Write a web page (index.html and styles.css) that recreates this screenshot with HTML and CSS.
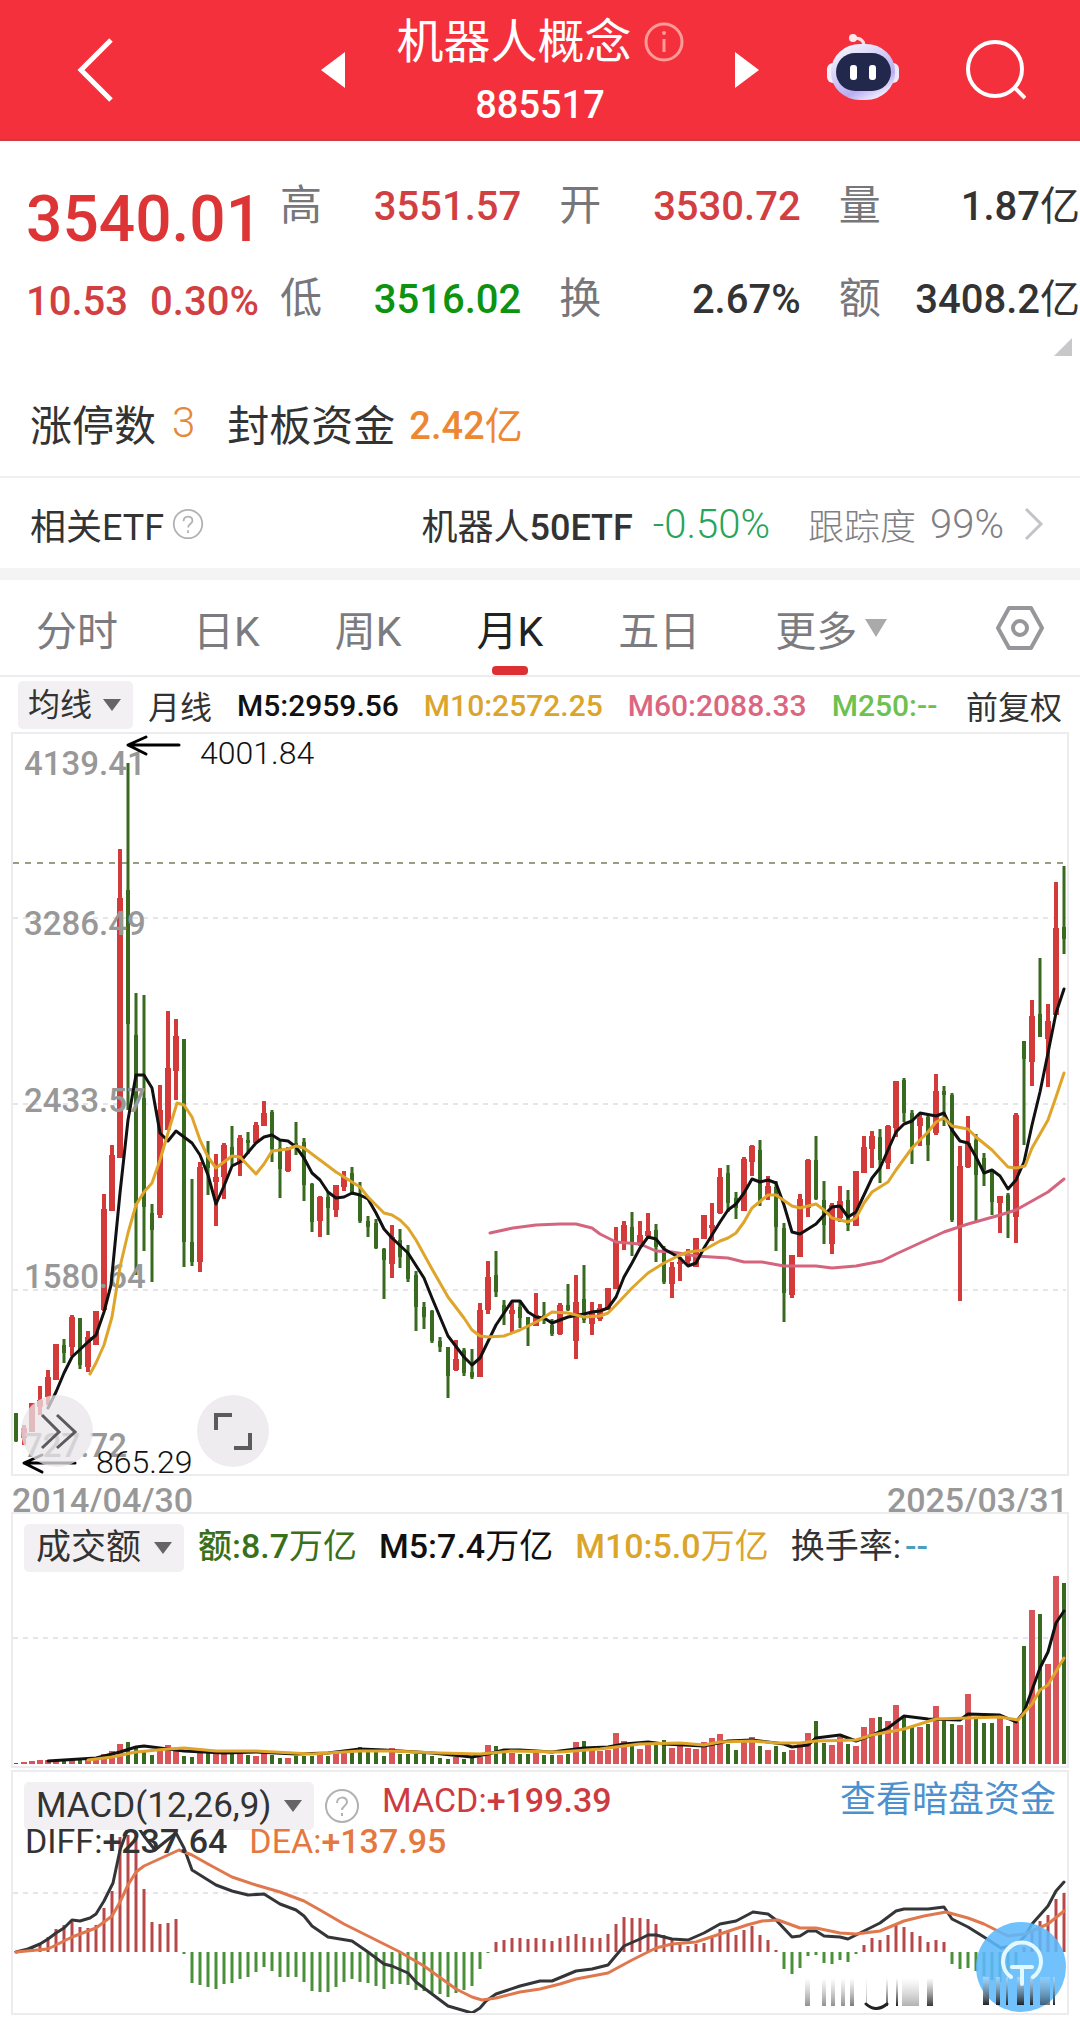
FILE: index.html
```html
<!DOCTYPE html>
<html lang="zh-CN">

<head>
    <meta charset="UTF-8">
    <meta name="viewport" content="width=device-width, initial-scale=1.0">
    <title>机器人概念 885517</title>
    <link rel="stylesheet" href="styles.css">
</head>

<body>
    <header class="topbar">
        <div class="topbar-side topbar-left">
            <button class="icon-btn" aria-label="返回">
                <svg width="40" height="68" viewBox="0 0 40 68"><path d="M35 4 5 34l30 30" fill="none" stroke="#fff" stroke-width="5"/></svg>
            </button>
            <button class="icon-btn" aria-label="上一个">
                <svg width="24" height="36" viewBox="0 0 24 36"><path d="M0 18 24 0v36z" fill="#fff"/></svg>
            </button>
        </div>
        <div class="topbar-title">
            <h1>机器人概念
                <svg width="40" height="40" viewBox="0 0 40 40"><g fill="none" stroke="#ff9a98" stroke-width="3"><circle cx="20" cy="20" r="18"/><path d="M20 17v13"/></g><circle cx="20" cy="11" r="2" fill="#ff9a98"/></svg>
            </h1>
            <div class="code">885517</div>
        </div>
        <div class="topbar-side">
            <button class="icon-btn" aria-label="下一个">
                <svg width="24" height="36" viewBox="0 0 24 36"><path d="M24 18 0 0v36z" fill="#fff"/></svg>
            </button>
            <button class="icon-btn" aria-label="智能助手">
                <svg width="72" height="72" viewBox="0 0 72 72">
                    <defs><linearGradient id="shell" x1="0" y1="0" x2="0.6" y2="1"><stop offset="0" stop-color="#fff"/><stop offset="0.8" stop-color="#b9adf3"/><stop offset="1" stop-color="#eae6fc"/></linearGradient></defs>
                    <path d="M37 12C37 6 33 4 27 4" fill="none" stroke="#f6dfe8" stroke-width="3"/>
                    <circle cx="26" cy="4" r="4" fill="#fbe9ef"/>
                    <rect x="0" y="29" width="12" height="20" rx="6" fill="#f3effc"/>
                    <rect x="60" y="29" width="12" height="20" rx="6" fill="#ece8fb"/>
                    <rect x="4" y="10" width="64" height="56" rx="29" ry="27" fill="url(#shell)"/>
                    <rect x="9" y="19" width="55" height="38" rx="19" fill="#22284c"/>
                    <rect x="23" y="31" width="7" height="15" rx="3" fill="#fff"/>
                    <rect x="42" y="31" width="7" height="15" rx="3" fill="#fff"/>
                </svg>
            </button>
            <button class="icon-btn" aria-label="搜索">
                <svg width="60" height="60" viewBox="0 0 60 60"><g fill="none" stroke="#fff" stroke-width="4"><circle cx="29" cy="29" r="27"/><path d="m48 47 11 11"/></g></svg>
            </button>
        </div>
    </header>

    <main>
        <section class="quote">
            <div class="quote-main">
                <div class="price">3540.01</div>
                <div class="change"><span>10.53</span><span>0.30%</span></div>
            </div>
            <dl class="quote-grid">
                <div><dt>高</dt><dd class="up">3551.57</dd></div>
                <div><dt>开</dt><dd class="up">3530.72</dd></div>
                <div><dt>量</dt><dd>1.87<span class="unit">亿</span></dd></div>
                <div><dt>低</dt><dd class="down">3516.02</dd></div>
                <div><dt>换</dt><dd>2.67%</dd></div>
                <div><dt>额</dt><dd>3408.2<span class="unit">亿</span></dd></div>
            </dl>
            <span class="corner"></span>
        </section>

        <section class="limits">
            <span>涨停数</span><span class="limit-count">3</span>
            <span>封板资金</span><span class="limit-money">2.42<span class="unit">亿</span></span>
        </section>

        <a class="etf" href="#etf">
            <span>相关ETF</span>
            <svg class="help" width="32" height="32" viewBox="0 0 36 36"><circle cx="18" cy="18" r="16"/><path d="M13 15c0-7 10-7 10-1 0 4-5 4-5 8"/><path d="M18 25v3"/></svg>
            <span class="etf-name">机器人<b>50ETF</b></span>
            <span class="etf-change">-0.50%</span>
            <span class="etf-track">跟踪度</span>
            <span class="etf-rate">99%</span>
            <svg width="20" height="34" viewBox="0 0 20 34"><path d="m2 2 15 15L2 32" fill="none" stroke="#c4c4c8" stroke-width="3"/></svg>
        </a>

        <nav class="tabs">
            <button>分时</button>
            <button>日K</button>
            <button>周K</button>
            <button class="active">月K</button>
            <button>五日</button>
            <button class="more">更多<svg width="22" height="18" viewBox="0 0 22 18"><path d="M0 0h22L11 18z" fill="#aaa"/></svg></button>
            <button class="settings" aria-label="设置">
                <svg width="48" height="48" viewBox="0 0 48 48"><g fill="none" stroke="#97979b" stroke-width="4" stroke-linejoin="round"><path d="M13 4h22l11 20-11 20H13L2 24z"/><circle cx="24" cy="24" r="7"/></g></svg>
            </button>
        </nav>

        <div class="legend">
            <span class="select"><select aria-label="指标"><option>均线</option></select></span>
            <span class="period">月线</span>
            <span class="m5">M5:2959.56</span>
            <span class="m10">M10:2572.25</span>
            <span class="m60">M60:2088.33</span>
            <span class="m250">M250:--</span>
            <span class="adjust">前复权</span>
        </div>

        <div class="charts">
            <section class="panel">
                <svg class="plot" id="priceChart" viewBox="12 733 1056 742"></svg>
                <div class="chart-tools">
                    <button class="round" aria-label="展开">
                        <svg width="72" height="72" viewBox="0 0 72 72"><path d="m21 20 17 17-17 16M36 20l18 17-18 16" fill="none" stroke="#5b5a5e" stroke-width="3"/></svg>
                    </button>
                    <button class="round" aria-label="全屏">
                        <svg width="72" height="72" viewBox="0 0 72 72"><path d="M19 35V20h16M53 38v15H37" fill="none" stroke="#5b5a5e" stroke-width="4"/></svg>
                    </button>
                </div>
            </section>
            <div class="dates"><span>2014/04/30</span><span>2025/03/31</span></div>

            <section class="panel">
                <svg class="plot" id="volumeChart" viewBox="12 1513 1056 254"></svg>
                <div class="panel-head">
                    <span class="select"><select aria-label="成交指标"><option>成交额</option></select></span>
                    <span class="amount">额:8.7<span class="unit">万亿</span></span>
                    <span class="m5">M5:7.4<span class="unit">万亿</span></span>
                    <span class="m10">M10:5.0<span class="unit">万亿</span></span>
                    <span>换手率:<b class="none">--</b></span>
                </div>
            </section>

            <section class="panel">
                <svg class="plot" id="macdChart" viewBox="12 1771 1056 243"></svg>
                <div class="panel-head">
                    <span class="select"><select aria-label="技术指标"><option>MACD(12,26,9)</option></select></span>
                    <svg class="help" width="36" height="36" viewBox="0 0 36 36"><circle cx="18" cy="18" r="16"/><path d="M13 15c0-7 10-7 10-1 0 4-5 4-5 8"/><path d="M18 25v3"/></svg>
                    <span class="macd">MACD:<b>+199.39</b></span>
                    <a class="dark-pool" href="#funds">查看暗盘资金</a>
                </div>
                <div class="macd-values"><span>DIFF:<b>+237.64</b></span><span class="dea">DEA:<b>+137.95</b></span></div>
                <button class="float-btn" aria-label="交易">
                    <svg width="90" height="90" viewBox="0 0 90 90">
                        <defs><linearGradient id="stripe" x1="0" y1="0" x2="0" y2="1"><stop offset="0" stop-color="#bfe3fb" stop-opacity="0.6"/><stop offset="1" stop-color="#1b232b"/></linearGradient></defs>
                        <g fill="url(#stripe)">
                            <rect x="7" y="55" width="6" height="28"/>
                            <rect x="20" y="55" width="4" height="28"/>
                            <rect x="30" y="55" width="2" height="28"/>
                            <rect x="41" y="55" width="7" height="28"/>
                            <rect x="54" y="55" width="3" height="28"/>
                            <rect x="64" y="55" width="10" height="28" opacity="0.6"/>
                            <rect x="77" y="55" width="2" height="28"/>
                        </g>
                        <g fill="none" stroke="#e4f8ff" stroke-width="4" stroke-linecap="round"><path d="M35 55a19 19 0 1 1 22 0M36 45h20M46 45v17"/></g>
                    </svg>
                </button>
            </section>
        </div>
    </main>

    <script src="chart.js"></script>
</body>

</html>
```
FILE: styles.css
```css
* {
    box-sizing: border-box;
}

body {
    margin: 0;
    background-color: #fff;
    color: #333;
    font-family: Roboto, "Noto Sans CJK SC", sans-serif;
    font-size: 36px;
}

button,
select {
    border: none;
    padding: 0;
    background: none;
    color: inherit;
    font: inherit;
    cursor: pointer;
}

a {
    color: inherit;
    text-decoration: none;
}

b {
    font-weight: 500;
}

svg {
    display: block;
}

.unit {
    font-weight: 400;
}

/* Top bar */
.topbar {
    display: grid;
    grid-template-columns: 1fr 390px 1fr;
    align-items: center;
    height: 141px;
    padding: 0 54px;
    background-color: #f3303c;
    border-bottom: 2px solid #cf3a40;
    color: #fff;
}

.topbar-side {
    display: flex;
    align-items: center;
    justify-content: space-between;
}

.topbar-left {
    padding-left: 22px;
}

.topbar-title {
    padding-top: 6px;
    text-align: center;
}

h1 {
    display: flex;
    align-items: center;
    justify-content: center;
    gap: 12px;
    margin: 0;
    font-size: 47px;
    font-weight: 400;
    line-height: 64px;
}

.code {
    font-size: 38px;
    font-weight: 500;
    line-height: 62px;
}

/* Quote */
.quote {
    position: relative;
    display: grid;
    grid-template-columns: 254px 1fr;
    padding: 20px 0 0 26px;
    height: 219px;
}

.price {
    color: #dd3436;
    font-size: 64px;
    font-weight: 500;
    line-height: 118px;
}

.change {
    display: flex;
    gap: 22px;
    color: #d23f42;
    font-size: 40px;
    font-weight: 500;
    line-height: 46px;
}

.quote-grid {
    display: grid;
    grid-template-columns: repeat(3, 1fr);
    grid-auto-rows: 93px;
    column-gap: 38px;
    margin: 0;
}

.quote-grid div {
    display: flex;
    align-items: baseline;
    justify-content: space-between;
    line-height: 90px;
}

dt {
    color: #77777b;
    font-size: 42px;
}

dd {
    margin: 0;
    font-size: 40px;
    font-weight: 500;
    white-space: nowrap;
}

.up {
    color: #d23f42;
}

.down {
    color: #0c930f;
}

.corner {
    position: absolute;
    right: 8px;
    bottom: 4px;
    border-left: 18px solid transparent;
    border-bottom: 18px solid #c8c8ca;
}

.limits {
    display: flex;
    align-items: center;
    height: 118px;
    padding: 8px 30px 0;
    border-bottom: 2px solid #f0f0f1;
    font-size: 42px;
}

.limit-count {
    margin: 0 32px 0 16px;
    color: #e58838;
    font-weight: 300;
}

.limit-money {
    margin-left: 14px;
    color: #ee8732;
    font-size: 38px;
    font-weight: 500;
}

.etf {
    display: flex;
    align-items: center;
    height: 102px;
    padding: 2px 36px 0 30px;
    border-bottom: 12px solid #f4f4f5;
}

.help {
    flex: none;
    margin-left: 8px;
    fill: none;
    stroke: #b2b2b5;
    stroke-width: 2;
}

.etf-name {
    margin-left: auto;
}

.etf-change {
    margin-left: 20px;
    color: #27a45c;
    font-size: 40px;
    font-weight: 300;
}

.etf-track,
.etf-rate {
    color: #808084;
    font-weight: 300;
}

.etf-track {
    margin-left: 38px;
}

.etf-rate {
    margin: 0 20px 0 14px;
    font-size: 40px;
}

/* Period tabs */
.tabs {
    display: flex;
    align-items: center;
    gap: 75px;
    height: 97px;
    padding: 0 36px;
    border-bottom: 2px solid #ececee;
    color: #7c7c80;
    font-size: 41px;
}

.tabs button {
    position: relative;
    display: flex;
    align-items: center;
    height: 95px;
}

.tabs .active {
    color: #222;
}

.tabs .active::after {
    content: "";
    position: absolute;
    left: 50%;
    bottom: 0;
    width: 36px;
    height: 9px;
    margin-left: -18px;
    border-radius: 4px;
    background-color: #dd3035;
}

.more {
    gap: 8px;
}

.tabs .settings {
    margin-left: auto;
}

/* Indicator values */
.legend {
    display: flex;
    align-items: center;
    gap: 25px;
    height: 56px;
    padding: 0 18px;
    font-size: 30px;
    font-weight: 500;
    white-space: nowrap;
}

.legend .select,
.period,
.adjust {
    font-size: 32px;
    font-weight: 400;
}

.period {
    margin-left: -10px;
}

.adjust {
    margin-left: auto;
}

.select {
    position: relative;
    display: flex;
    border-radius: 5px;
    background-color: #f2f0f3;
}

.select::after {
    content: "";
    position: absolute;
    top: 50%;
    right: 12px;
    margin-top: -6px;
    border: 9px solid transparent;
    border-top: 12px solid #666469;
    border-bottom: 0;
    pointer-events: none;
}

.select select {
    appearance: none;
    height: 48px;
    padding: 0 40px 0 10px;
}

.m5 {
    color: #111;
}

.m10 {
    color: #dba52b;
}

.m60 {
    color: #dc6580;
}

.m250 {
    color: #6cc14f;
}

/* Chart panels */
.charts {
    padding: 0 12px 18px;
    border-bottom: 10px solid #f6f5f7;
}

.panel {
    position: relative;
    outline: 2px solid #ececee;
    outline-offset: -1px;
}

.plot {
    width: 100%;
    height: auto;
}

.axis {
    fill: #989898;
    font-size: 33px;
    font-weight: 500;
}

.extreme {
    fill: #111;
    font-size: 32px;
    font-weight: 300;
}

.line {
    fill: none;
    stroke-width: 3;
    stroke-linejoin: round;
    stroke-linecap: round;
}

.grid-line {
    stroke: #e6e6e8;
    stroke-width: 2;
    stroke-dasharray: 5 5;
}

.last-line {
    stroke: #999e80;
    stroke-width: 2;
    stroke-dasharray: 6 6;
}

.chart-tools {
    position: absolute;
    left: 9px;
    bottom: 8px;
    display: flex;
    gap: 104px;
}

.round {
    width: 72px;
    height: 72px;
    border-radius: 50%;
    background-color: rgba(232, 230, 234, 0.75);
}

.dates {
    display: flex;
    justify-content: space-between;
    height: 38px;
    color: #989898;
    font-size: 34px;
    font-weight: 500;
    line-height: 50px;
}

.panel + .panel {
    margin-top: 4px;
}

.panel-head {
    position: absolute;
    top: 11px;
    left: 12px;
    right: 12px;
    display: flex;
    align-items: center;
    gap: 22px;
    font-size: 34px;
    line-height: 44px;
}

.panel-head > span,
.dark-pool {
    align-self: flex-start;
}

.panel-head .select {
    font-size: 35px;
}

.panel-head .select select {
    padding: 0 42px 0 12px;
}

.panel-head .m5,
.panel-head .m10,
.amount {
    font-weight: 500;
}

.panel-head .select + span {
    margin-left: -8px;
}

.amount {
    color: #39701c;
}

.none {
    margin-left: 4px;
    color: #4a9fbe;
}

.panel-head .help {
    margin-left: -12px;
}

.panel-head .macd,
.dark-pool {
    line-height: 36px;
}

.macd {
    color: #cd3b41;
}

.dark-pool {
    margin-left: auto;
    color: #4c91cd;
    font-size: 36px;
}

.macd-values {
    position: absolute;
    top: 51px;
    left: 13px;
    display: flex;
    gap: 22px;
    font-size: 34px;
    line-height: 38px;
}

.dea {
    color: #e5783f;
}

.float-btn {
    position: absolute;
    right: 2px;
    bottom: 2px;
    width: 90px;
    height: 90px;
    border-radius: 50%;
    background-color: rgba(92, 184, 252, 0.88);
}
```
FILE: chart.js
```js
const SVG_NS = 'http://www.w3.org/2000/svg';
const RED = '#d33b3a';
const GREEN = '#386a1f';
const FIRST_X = 16;
const STEP = 8;

// One month per entry: direction, high, body top, body bottom, low (plot units)
const candles = `
d 1413 1413 1441 1442|u 1425 1428 1438 1445|u 1403 1403 1432 1432|u 1386 1400 1407 1415|u 1370 1377 1397 1405
u 1344 1344 1380 1380|d 1339 1345 1353 1363|u 1315 1317 1347 1356|d 1318 1318 1365 1369|u 1331 1337 1367 1372
u 1311 1311 1345 1345|u 1194 1209 1310 1311|u 1145 1155 1211 1211|u 849 898 1158 1158|d 763 890 1024 1110
d 993 1035 1203 1275|d 995 1098 1207 1251|d 1204 1213 1230 1282|u 1085 1110 1215 1218|u 1011 1068 1130 1130
u 1019 1036 1071 1100|d 1039 1039 1242 1267|d 1179 1242 1262 1266|u 1162 1167 1262 1272|d 1141 1157 1168 1195
u 1154 1177 1182 1226|u 1143 1145 1177 1199|d 1126 1147 1158 1165|u 1135 1138 1163 1176|d 1132 1140 1143 1154
u 1122 1125 1143 1143|u 1101 1113 1126 1126|d 1110 1112 1149 1162|d 1141 1148 1169 1198|u 1147 1148 1171 1172
d 1122 1143 1148 1155|d 1138 1142 1185 1201|d 1183 1184 1222 1232|u 1196 1197 1221 1237|d 1192 1197 1208 1235
u 1185 1185 1210 1217|u 1171 1177 1187 1191|d 1167 1173 1192 1195|d 1182 1195 1221 1223|d 1216 1221 1227 1237
d 1219 1223 1248 1249|d 1248 1249 1260 1299|u 1225 1237 1264 1278|d 1229 1240 1257 1268|d 1245 1253 1279 1282
d 1271 1275 1307 1331|d 1302 1307 1317 1329|d 1310 1311 1341 1343|d 1337 1341 1347 1352|d 1347 1347 1376 1398
u 1340 1359 1370 1371|d 1348 1350 1373 1376|d 1349 1372 1377 1379|u 1303 1310 1377 1377|u 1261 1277 1310 1314
d 1251 1275 1292 1297|d 1300 1305 1313 1325|u 1302 1310 1314 1332|d 1302 1307 1318 1328|d 1317 1317 1327 1346
u 1293 1315 1326 1326|d 1302 1315 1320 1324|d 1319 1325 1334 1336|u 1303 1305 1334 1335|d 1284 1305 1310 1311
u 1275 1302 1341 1359|d 1265 1299 1320 1323|u 1302 1313 1324 1335|u 1304 1308 1319 1321|u 1288 1288 1310 1310
u 1227 1242 1289 1289|u 1221 1225 1243 1250|d 1212 1227 1243 1256|u 1221 1235 1245 1246|u 1213 1231 1236 1237
d 1224 1230 1247 1262|d 1246 1250 1282 1284|u 1262 1267 1284 1298|u 1257 1262 1264 1281|u 1249 1255 1261 1265
u 1238 1238 1267 1267|u 1215 1215 1239 1239|u 1203 1225 1228 1241|u 1168 1177 1213 1214|d 1165 1173 1203 1212
d 1192 1198 1208 1219|u 1157 1159 1211 1211|u 1145 1146 1162 1176|d 1140 1150 1202 1206|u 1176 1186 1195 1200
d 1181 1187 1227 1251|d 1223 1228 1293 1322|u 1255 1255 1295 1298|u 1194 1199 1257 1257|u 1159 1160 1208 1217
d 1136 1160 1199 1200|d 1181 1200 1225 1244|u 1203 1205 1244 1254|u 1186 1201 1218 1222|d 1190 1200 1225 1231
u 1171 1171 1226 1226|u 1136 1147 1173 1173|u 1131 1136 1149 1168|d 1129 1137 1160 1183|u 1125 1126 1163 1169
u 1081 1081 1128 1137|d 1078 1080 1113 1122|d 1110 1113 1147 1164|u 1113 1118 1126 1146|d 1114 1117 1145 1161
u 1074 1091 1133 1135|d 1086 1091 1095 1126|d 1093 1095 1220 1222|u 1146 1166 1227 1301|u 1116 1143 1167 1168
d 1134 1140 1175 1221|d 1153 1158 1170 1186|d 1169 1170 1202 1215|u 1196 1196 1203 1233|d 1193 1195 1213 1238
u 1113 1115 1217 1243|d 1041 1041 1059 1145|u 1000 1016 1062 1086|d 958 1014 1037 1037|u 1004 1021 1039 1087
u 882 928 1015 1015|d 866 927 939 954
`.trim().split(/[|\n]/).map(row => {
    const [dir, ...values] = row.split(' ');
    const [high, top, bottom, low] = values.map(Number);
    return { up: dir === 'u', high, top, bottom, low };
});

const volumes = [
    1, 2, 3, 4, 4, 4, 3, 5, 5, 5, 5, 10, 13, 20, 22, 17, 13, 9, 15, 19, 14, 8, 7, 12, 11, 11, 12, 11, 12, 9,
    8, 11, 9, 6, 6, 8, 8, 8, 10, 8, 11, 11, 13, 17, 13, 12, 8, 16, 10, 10, 10, 10, 8, 6, 5, 7, 5, 6, 7, 19,
    18, 12, 11, 10, 10, 12, 9, 9, 9, 10, 22, 23, 14, 13, 14, 31, 23, 18, 15, 22, 19, 24, 16, 18, 16, 15, 22,
    26, 30, 20, 14, 22, 27, 18, 14, 18, 12, 14, 22, 31, 43, 21, 19, 27, 20, 18, 37, 46, 47, 43, 59, 47, 37,
    37, 40, 58, 44, 40, 39, 70, 45, 41, 41, 46, 38, 42, 118, 154, 150, 100, 188, 181
];

const macd = [
    1, 2, 5, 9, 15, 23, 27, 30, 25, 24, 27, 44, 61, 115, 117, 113, 63, 30, 28, 29, 33, -2, -31, -33, -35, -37,
    -32, -31, -27, -25, -20, -15, -19, -25, -25, -25, -30, -39, -40, -40, -35, -30, -27, -30, -31, -34, -37,
    -32, -32, -33, -38, -39, -41, -42, -45, -41, -38, -34, -17, -1, 10, 12, 14, 14, 13, 14, 13, 11, 14, 16,
    18, 15, 14, 14, 18, 28, 35, 34, 34, 33, 28, 17, 12, 8, 6, 8, 9, 14, 23, 20, 17, 22, 26, 17, 12, 2, -17,
    -22, -16, -4, -3, -11, -12, -8, -10, -2, 7, 14, 12, 17, 27, 25, 20, 16, 10, 12, 10, -12, -17, -16, -19,
    -24, -28, -30, -26, -13, 5, 20, 31, 37, 53, 59
];

const priceM5 = '48,1408 56,1392 64,1373 72,1357 88,1342 96,1335 104,1312 111,1285 120,1193 128,1120 136,1075 144,1075 152,1088 160,1133 168,1141 176,1131 192,1143 200,1155 208,1175 216,1204 224,1186 232,1166 240,1162 256,1143 264,1137 272,1135 280,1140 288,1141 296,1147 304,1158 312,1173 320,1180 328,1192 336,1198 344,1197 352,1193 360,1195 368,1199 376,1213 384,1229 392,1238 408,1253 424,1278 432,1298 448,1336 464,1357 472,1365 480,1358 496,1325 504,1313 512,1301 520,1301 528,1312 536,1317 544,1318 552,1323 560,1320 568,1317 584,1314 592,1312 600,1311 608,1308 616,1297 624,1277 632,1263 640,1248 648,1237 656,1239 664,1249 680,1258 688,1266 696,1263 704,1248 712,1235 720,1222 728,1210 736,1204 744,1193 752,1179 760,1182 768,1180 776,1183 784,1205 792,1232 800,1234 816,1224 824,1215 832,1207 840,1206 848,1217 856,1212 864,1195 872,1178 880,1168 888,1150 896,1132 904,1124 912,1121 920,1113 936,1116 944,1113 952,1130 960,1141 968,1143 976,1157 984,1173 992,1170 1000,1176 1008,1189 1016,1180 1024,1162 1032,1125 1040,1092 1048,1053 1056,1013 1064,989';
const priceM10 = '90,1374 96,1363 104,1345 112,1317 120,1267 128,1233 136,1205 144,1192 152,1183 160,1160 168,1133 177,1103 184,1105 192,1117 200,1140 208,1157 216,1168 232,1156 240,1157 256,1174 264,1164 272,1151 288,1149 296,1146 304,1148 320,1160 336,1172 360,1187 368,1197 384,1213 392,1215 400,1220 408,1228 416,1240 432,1269 448,1297 464,1318 472,1330 480,1336 488,1337 504,1336 520,1330 540,1320 552,1312 568,1313 584,1317 600,1316 608,1313 616,1305 632,1288 648,1273 664,1263 680,1255 688,1252 704,1250 720,1241 728,1238 736,1233 744,1222 752,1208 768,1195 776,1195 792,1206 800,1208 816,1204 824,1210 832,1218 848,1222 856,1218 864,1203 872,1192 888,1182 896,1170 912,1148 928,1132 936,1122 944,1118 952,1126 968,1129 976,1137 992,1150 1008,1167 1016,1168 1025,1166 1032,1148 1048,1120 1056,1097 1064,1073';
const priceM60 = '490,1233 513,1228 536,1225 560,1224 576,1224 592,1228 600,1234 616,1242 640,1244 656,1251 672,1252 696,1256 728,1258 744,1262 762,1262 784,1266 816,1266 832,1268 856,1266 882,1261 896,1254 920,1243 944,1232 968,1224 1000,1215 1016,1210 1032,1201 1048,1192 1064,1179';
const volumeM5 = '48,1761 96,1758 120,1752 136,1747 144,1746 160,1748 184,1751 224,1753 256,1752 296,1754 328,1753 360,1749 384,1750 432,1753 472,1757 488,1754 504,1750 520,1750 552,1752 584,1748 608,1747 624,1744 648,1742 664,1744 704,1746 728,1741 752,1740 784,1744 792,1747 808,1745 816,1738 840,1735 856,1741 872,1735 888,1728 904,1716 928,1719 960,1720 968,1714 1000,1715 1016,1722 1024,1712 1032,1690 1040,1668 1048,1652 1056,1623 1064,1611';
const volumeM10 = '88,1760 112,1757 136,1752 168,1749 184,1748 216,1751 256,1751 312,1754 360,1751 392,1751 440,1753 480,1754 512,1751 560,1752 600,1749 640,1744 680,1743 704,1745 720,1742 752,1741 776,1743 800,1743 816,1741 856,1740 872,1735 904,1729 936,1719 968,1718 1000,1717 1018,1720 1032,1704 1040,1690 1048,1685 1064,1658';
const diff = '16,1952 28,1949 40,1944 48,1939 56,1933 64,1928 72,1920 80,1921 90,1918 96,1914 104,1901 113,1883 120,1850 128,1828 136,1824 144,1836 155,1850 176,1833 184,1848 192,1870 216,1885 232,1891 248,1895 264,1894 280,1904 296,1910 304,1916 312,1926 328,1937 352,1941 368,1952 384,1964 392,1966 408,1973 416,1982 448,2006 472,2013 480,2008 486,2001 496,1994 520,1986 540,1981 552,1981 576,1971 592,1969 608,1965 624,1946 640,1939 648,1935 656,1935 672,1939 688,1940 704,1933 720,1924 736,1921 753,1912 768,1914 776,1920 792,1937 800,1936 808,1931 816,1931 824,1936 840,1937 848,1939 864,1931 880,1923 896,1911 904,1909 928,1909 944,1907 952,1919 968,1927 984,1937 1001,1948 1016,1945 1025,1936 1032,1924 1048,1906 1056,1891 1064,1882';
const dea = '16,1952 48,1949 72,1937 96,1928 112,1916 120,1902 128,1885 136,1872 144,1866 179,1850 192,1855 208,1864 232,1877 256,1885 280,1892 304,1901 320,1910 344,1924 368,1936 400,1952 424,1966 456,1989 472,1997 482,2000 496,1998 520,1992 540,1989 560,1984 576,1979 608,1973 632,1960 656,1948 672,1944 696,1942 720,1934 747,1925 762,1921 778,1920 800,1928 816,1928 840,1933 856,1934 880,1931 904,1921 924,1916 946,1912 968,1918 984,1924 1008,1936 1025,1934 1048,1924 1064,1911';

function add(parent, tag, attrs, text) {
    const el = document.createElementNS(SVG_NS, tag);
    for (const key in attrs) el.setAttribute(key, attrs[key]);
    if (text) el.textContent = text;
    parent.appendChild(el);
    return el;
}

function bar(svg, x, top, bottom, width, fill) {
    add(svg, 'rect', { x: x - width / 2, y: top, width, height: Math.max(1, bottom - top), fill });
}

function line(svg, points, stroke) {
    add(svg, 'polyline', { points, stroke, class: 'line' });
}

function gridLine(svg, y, className) {
    add(svg, 'line', { x1: 13, x2: 1066, y1: y, y2: y, class: className || 'grid-line' });
}

function drawPrice() {
    const svg = document.getElementById('priceChart');
    [918, 1104, 1290].forEach(y => gridLine(svg, y));
    gridLine(svg, 863, 'last-line');

    candles.forEach((c, i) => {
        const x = FIRST_X + i * STEP;
        const color = c.up ? RED : GREEN;
        bar(svg, x, c.high, c.low, c.up ? 4 : 3, color);
        bar(svg, x, c.top, c.bottom, c.up ? 6 : 4, color);
    });

    [[775, '4139.41'], [935, '3286.49'], [1112, '2433.57'], [1288, '1580.64'], [1457, '727.72']].forEach(([y, label]) => {
        add(svg, 'text', { x: 24, y, class: 'axis' }, label);
    });

    line(svg, priceM60, '#d5657f');
    line(svg, priceM5, '#111');
    line(svg, priceM10, '#dfa52a');

    // High and low markers
    add(svg, 'path', { d: 'M179 745H128M146 737l-18 8 18 9', class: 'line', stroke: '#000' });
    add(svg, 'path', { d: 'M75 1463H24M42 1455l-18 8 18 9', class: 'line', stroke: '#000' });
    add(svg, 'text', { x: 200, y: 764, class: 'extreme' }, '4001.84');
    add(svg, 'text', { x: 96, y: 1473, class: 'extreme' }, '865.29');
}

function drawVolume() {
    const svg = document.getElementById('volumeChart');
    gridLine(svg, 1638);
    volumes.forEach((v, i) => {
        const up = candles[i].up;
        bar(svg, FIRST_X + i * STEP, 1764 - v, 1764, up ? 6 : 4, up ? '#d9555a' : GREEN);
    });
    line(svg, volumeM5, '#111');
    line(svg, volumeM10, '#dfa52a');
}

function drawMacd() {
    const svg = document.getElementById('macdChart');
    gridLine(svg, 1893);
    macd.forEach((v, i) => {
        bar(svg, FIRST_X + i * STEP, Math.min(1952, 1952 - v), Math.max(1952, 1952 - v), 3, v > 0 ? '#b8494a' : '#4a9038');
    });
    line(svg, diff, '#333538');
    line(svg, dea, '#e0784e');

    // Faded stripes left of the round button
    const fade = add(add(svg, 'defs', {}), 'linearGradient', { id: 'fade', x1: 0, y1: 0, x2: 0, y2: 1 });
    add(fade, 'stop', { offset: 0, 'stop-color': '#fff', 'stop-opacity': 0.7 });
    add(fade, 'stop', { offset: 1, 'stop-color': '#222' });
    [[805, 5, 0.5], [822, 4, 0.5], [831, 4, 0.5], [841, 4, 0.5], [850, 4, 0.6], [866, 1, 0.4],
        [886, 2, 0.8], [896, 2, 1], [902, 17, 0.35], [927, 6, 0.9]].forEach(([x, width, opacity]) => {
        add(svg, 'rect', { x, y: 1978, width, height: 28, fill: 'url(#fade)', opacity });
    });
    add(svg, 'path', { d: 'M866 2004q10 9 21 0', class: 'line', stroke: '#222' });
}

drawPrice();
drawVolume();
drawMacd();
```
